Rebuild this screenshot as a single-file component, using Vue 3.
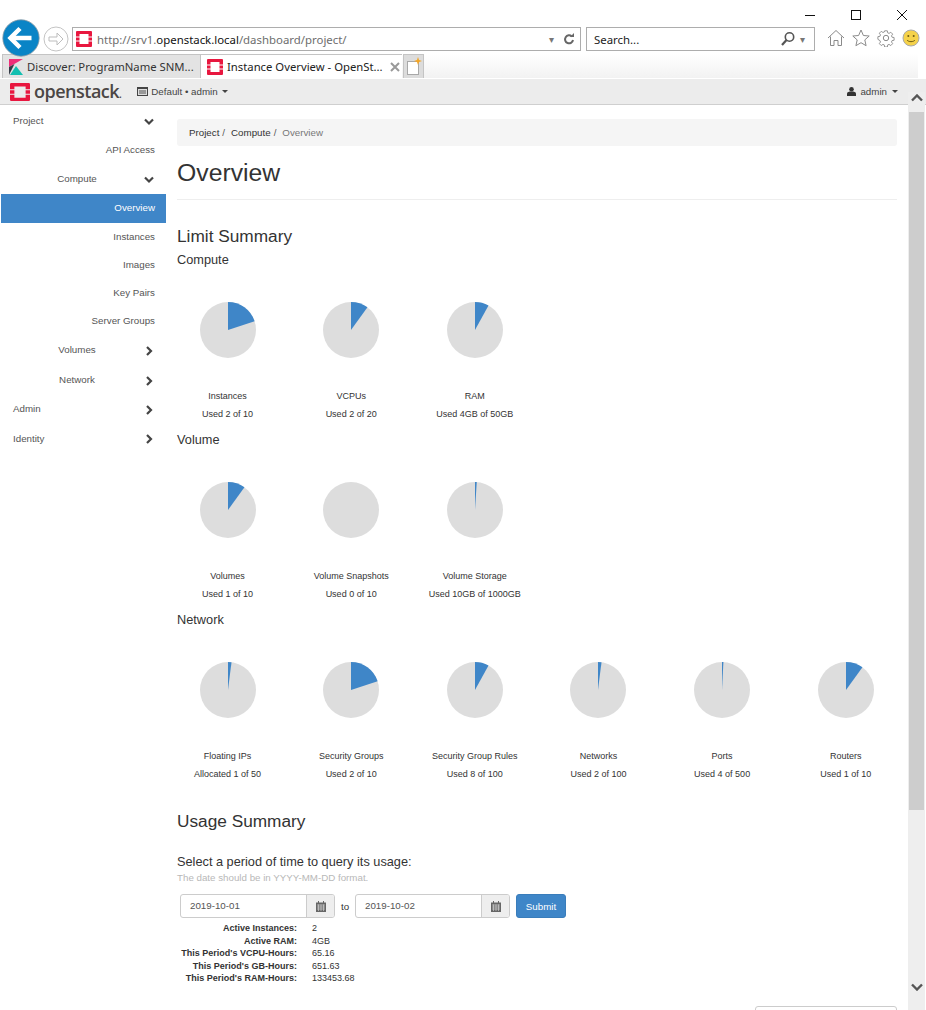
<template>
  <div class="window">
    <!-- ie chrome -->
    <div class="titlebar">
      <svg class="win-btn" width="16" height="16" viewBox="0 0 16 16"><path d="M3 8.500h10" stroke="#111" fill="none" /></svg>
      <svg class="win-btn" width="16" height="16" viewBox="0 0 16 16"><rect x="3.500" y="3.500" width="9" height="9" stroke="#111" fill="none" /></svg>
      <svg class="win-btn" width="16" height="16" viewBox="0 0 16 16"><path d="M3 3l10 10M13 3L3 13" stroke="#111" fill="none" /></svg>
    </div>
    <div class="toolbar">
      <svg class="back" width="38" height="38" viewBox="0 0 38 38">
        <circle cx="19" cy="19" r="18.200" fill="#0a84c6" stroke="#8a9aa5" stroke-width="0.8" />
        <path d="M8.500 19h21" stroke="#fff" stroke-width="4.500" fill="none" />
        <path d="M18 9.500L8.500 19l9.500 9.500" stroke="#fff" stroke-width="4.500" fill="none" />
      </svg>
      <svg class="forward" width="26" height="26" viewBox="0 0 26 26">
        <circle cx="13" cy="13" r="12" fill="#fff" stroke="#c4c4c4" />
        <path d="M6 11h8V7l6 6-6 6v-4H6z" fill="none" stroke="#bdbdbd" />
      </svg>
      <div class="addr">
        <svg class="fav" width="16" height="16" viewBox="0 0 16 16"><use href="#os-mark" /></svg>
        <span class="url">http://srv1.<b>openstack.local</b>/dashboard/project/</span>
        <span class="drop">▾</span>
        <svg width="12" height="14" viewBox="0 0 12 14"><path d="M10 8a4 4 0 1 1-1.200-3.600" fill="none" stroke="#666" stroke-width="2" /><path d="M7 5h4V1z" fill="#666" /></svg>
      </div>
      <div class="search">
        <span class="search-text">Search...</span>
        <svg width="16" height="16" viewBox="0 0 16 16"><circle cx="9.500" cy="6" r="4.200" fill="none" stroke="#555" stroke-width="1.600" /><path d="M6.500 9L2 14" stroke="#555" stroke-width="2.200" /></svg>
        <span class="drop">▾</span>
      </div>
      <div class="tools">
        <svg width="18" height="18" viewBox="0 0 18 18"><path d="M1 9l8-7.500L17 9M3.500 7.500v9H7v-5h4v5h3.500v-9" fill="none" stroke="#8a8a8a" /></svg>
        <svg width="18" height="18" viewBox="0 0 18 18"><path d="M9 1l2.400 5.500 5.800.5-4.400 3.900 1.300 5.800L9 13.700l-5.100 3 1.300-5.800L.8 7l5.800-.5z" fill="none" stroke="#8a8a8a" /></svg>
        <svg width="18" height="18" viewBox="0 0 18 18"><circle cx="9" cy="9" r="2.700" fill="none" stroke="#8a8a8a" /><path d="M7.500 1h3l.4 2.300 1.500.6 1.900-1.300 2.100 2.100-1.300 1.900.6 1.500 2.300.4v3l-2.300.4-.6 1.500 1.300 1.900-2.100 2.100-1.900-1.300-1.500.6-.4 2.300h-3l-.4-2.300-1.500-.6-1.900 1.300-2.100-2.100 1.300-1.900-.6-1.500L0 10.500v-3l2.300-.4.6-1.500-1.300-1.900 2.100-2.100 1.900 1.300 1.500-.6z" fill="none" stroke="#8a8a8a" transform="translate(.9 .9) scale(.9)" /></svg>
        <svg width="18" height="18" viewBox="0 0 18 18"><circle cx="9" cy="9" r="8" fill="#f5d24a" stroke="#a9a9a9" /><circle cx="6.300" cy="7" r="1" fill="#6d5a12" /><circle cx="11.700" cy="7" r="1" fill="#6d5a12" /><path d="M5 11c1.500 2.200 6.500 2.200 8 0" fill="none" stroke="#6d5a12" /></svg>
      </div>
    </div>
    <div class="tabstrip">
      <div class="tab tab-off">
        <svg width="14" height="16" viewBox="0 0 14 16">
          <path d="M0 0h14L0 8z" fill="#ef2f78" />
          <path d="M0 8l5.500-3L0 16z" fill="#333a45" />
          <path d="M1 16L7 7l7 9z" fill="#12bfb0" />
        </svg>
        <span>Discover: ProgramName SNM...</span>
      </div>
      <div class="tab tab-on">
        <svg width="16" height="16" viewBox="0 0 16 16"><use href="#os-mark" /></svg>
        <span class="tab-title">Instance Overview - OpenSt...</span>
        <svg class="tab-close" width="10" height="10" viewBox="0 0 10 10"><path d="M1 1l8 8M9 1L1 9" stroke="#999" stroke-width="2" /></svg>
      </div>
      <div class="tab-new">
        <svg width="16" height="20" viewBox="0 0 16 20">
          <rect x="1.500" y="4.500" width="11" height="13" fill="#fff" stroke="#a8a8a8" />
          <path d="M12 0l1 3 3 1-3 1-1 3-1-3-3-1 3-1z" fill="#f5a623" />
        </svg>
      </div>
    </div>

    <!-- horizon -->
    <nav class="topbar">
      <svg class="logo" width="20" height="18" viewBox="0 0 16 16" preserveAspectRatio="none"><use href="#os-mark" /></svg>
      <span class="brand">openstack<small>.</small></span>
      <span class="project">
        <svg width="11" height="9" viewBox="0 0 11 9"><rect width="11" height="9" fill="#444" /><path d="M1 2h9v6H1z" fill="#ddd" /><path d="M2 4h7M2 6h7" stroke="#555" /></svg>
        Default • admin
        <i class="caret"></i>
      </span>
      <span class="user">
        <svg width="9" height="9" viewBox="0 0 9 9"><circle cx="4.500" cy="2.300" r="2.300" fill="#333" /><path d="M0 9V6.500C0 5 2 4.500 4.500 4.500S9 5 9 6.500V9z" fill="#333" /></svg>
        admin
        <i class="caret"></i>
      </span>
    </nav>

    <div class="page">
      <aside class="sidebar">
        <div
          v-for="item in menu"
          :key="item.label"
          class="menu-item"
          :class="[`lvl-${item.level}`, { active: item.active, hasicon: item.arrow }]"
          :style="{ height: item.h + 'px' }"
        >
          <span class="menu-label">{{ item.label }}</span>
          <svg v-if="item.arrow === 'down'" class="chev" width="10" height="8" viewBox="0 0 10 8"><path d="M1 1.500l4 4 4-4" fill="none" stroke="#444" stroke-width="2.200" /></svg>
          <svg v-if="item.arrow === 'right'" class="chev" width="10" height="10" viewBox="0 0 10 10"><path d="M3 1l4 4-4 4" fill="none" stroke="#444" stroke-width="2.200" /></svg>
        </div>
      </aside>

      <main class="content">
        <div class="breadcrumb">
          <span>Project</span><em>/</em><span>Compute</span><em>/</em><span class="here">Overview</span>
        </div>
        <h1>Overview</h1>

        <h2 class="limit-title">Limit Summary</h2>
        <section v-for="group in groups" :key="group.title" class="limits">
          <h3>{{ group.title }}</h3>
          <div class="pies">
            <div v-for="pie in group.pies" :key="pie.name" class="pie-cell">
              <svg width="56" height="56" viewBox="0 0 56 56">
                <circle cx="28" cy="28" r="28" fill="#dddddd" />
                <path v-if="pie.frac > 0" :d="wedge(pie.frac)" fill="#3f86c8" />
              </svg>
              <div class="pie-name">{{ pie.name }}</div>
              <div class="pie-used">{{ pie.used }}</div>
            </div>
          </div>
        </section>

        <h2 class="usage-title">Usage Summary</h2>
        <h4>Select a period of time to query its usage:</h4>
        <p class="hint">The date should be in YYYY-MM-DD format.</p>
        <form class="period" @submit.prevent>
          <div class="datebox">
            <span class="dateval">2019-10-01</span>
            <span class="addon"><svg width="10" height="11" viewBox="0 0 10 11"><path d="M0 1.500h10V11H0z" fill="#666" /><path d="M2 0h1v2H2zM7 0h1v2H7z" fill="#666" /><path d="M1 4h8M1 6h8M1 8h8M2.500 3.500v6.500M5 3.500v6.500M7.500 3.500v6.500" stroke="#ddd" stroke-width=".6" /></svg></span>
          </div>
          <span class="to">to</span>
          <div class="datebox">
            <span class="dateval">2019-10-02</span>
            <span class="addon"><svg width="10" height="11" viewBox="0 0 10 11"><path d="M0 1.500h10V11H0z" fill="#666" /><path d="M2 0h1v2H2zM7 0h1v2H7z" fill="#666" /><path d="M1 4h8M1 6h8M1 8h8M2.500 3.500v6.500M5 3.500v6.500M7.500 3.500v6.500" stroke="#ddd" stroke-width=".6" /></svg></span>
          </div>
          <button class="submit" type="submit">Submit</button>
        </form>
        <dl class="stats">
          <template v-for="row in stats" :key="row[0]">
            <dt>{{ row[0] }}</dt>
            <dd>{{ row[1] }}</dd>
          </template>
        </dl>
        <div class="stub-wrap"><div class="stub"></div></div>
      </main>

      <div class="scrollbar">
        <svg width="12" height="8" viewBox="0 0 12 8"><path d="M1 6.500l5-5 5 5" fill="none" stroke="#555" stroke-width="2.400" /></svg>
        <div class="thumb"></div>
        <svg class="sb-down" width="12" height="8" viewBox="0 0 12 8"><path d="M1 1.500l5 5 5-5" fill="none" stroke="#555" stroke-width="2.400" /></svg>
      </div>
    </div>

    <svg width="0" height="0" class="defs">
      <symbol id="os-mark" viewBox="0 0 16 16">
        <path d="M1 0h14a1 1 0 0 1 1 1v4.500h-3.500V3h-9v2.500H0V1a1 1 0 0 1 1-1z" fill="#e8173f" />
        <path d="M0 10.500h3.500V13h9v-2.500H16V15a1 1 0 0 1-1 1H1a1 1 0 0 1-1-1z" fill="#e8173f" />
        <path d="M0 6.500h3.500v3H0zM12.500 6.500H16v3h-3.500z" fill="#e8173f" />
      </symbol>
    </svg>
  </div>
</template>

<script setup>
const menu = [
  { label: 'Project', level: 0, arrow: 'down', h: 29 },
  { label: 'API Access', level: 2, h: 29 },
  { label: 'Compute', level: 1, arrow: 'down', h: 29 },
  { label: 'Overview', level: 2, active: true, h: 29 },
  { label: 'Instances', level: 2, h: 28 },
  { label: 'Images', level: 2, h: 28 },
  { label: 'Key Pairs', level: 2, h: 28 },
  { label: 'Server Groups', level: 2, h: 28 },
  { label: 'Volumes', level: 1, arrow: 'right', h: 31 },
  { label: 'Network', level: 1, arrow: 'right', h: 29 },
  { label: 'Admin', level: 0, arrow: 'right', h: 29 },
  { label: 'Identity', level: 0, arrow: 'right', h: 30 }
]

const groups = [
  {
    title: 'Compute',
    pies: [
      { name: 'Instances', used: 'Used 2 of 10', frac: 0.2 },
      { name: 'VCPUs', used: 'Used 2 of 20', frac: 0.1 },
      { name: 'RAM', used: 'Used 4GB of 50GB', frac: 0.08 }
    ]
  },
  {
    title: 'Volume',
    pies: [
      { name: 'Volumes', used: 'Used 1 of 10', frac: 0.1 },
      { name: 'Volume Snapshots', used: 'Used 0 of 10', frac: 0 },
      { name: 'Volume Storage', used: 'Used 10GB of 1000GB', frac: 0.01 }
    ]
  },
  {
    title: 'Network',
    pies: [
      { name: 'Floating IPs', used: 'Allocated 1 of 50', frac: 0.02 },
      { name: 'Security Groups', used: 'Used 2 of 10', frac: 0.2 },
      { name: 'Security Group Rules', used: 'Used 8 of 100', frac: 0.08 },
      { name: 'Networks', used: 'Used 2 of 100', frac: 0.02 },
      { name: 'Ports', used: 'Used 4 of 500', frac: 0.008 },
      { name: 'Routers', used: 'Used 1 of 10', frac: 0.1 }
    ]
  }
]

const stats = [
  ['Active Instances:', '2'],
  ['Active RAM:', '4GB'],
  ["This Period's VCPU-Hours:", '65.16'],
  ["This Period's GB-Hours:", '651.63'],
  ["This Period's RAM-Hours:", '133453.68']
]

// pie slice from 12 o'clock, clockwise
function wedge(frac) {
  const a = frac * Math.PI * 2
  const x = 28 + 28 * Math.sin(a)
  const y = 28 - 28 * Math.cos(a)
  return `M28 28V0A28 28 0 0 1 ${x.toFixed(2)} ${y.toFixed(2)}Z`
}
</script>

<style>
html, body {
  margin: 0;
  background: #fff;
  overflow: hidden;
}
</style>

<style scoped>
.window {
  width: 926px;
  height: 1010px;
  overflow: hidden;
  position: relative;
  background: #fff;
  font-family: "Liberation Sans", Arial, sans-serif;
  font-size: 9.75px;
  color: #333;
}

.defs {
  position: absolute;
}

.titlebar {
  height: 27px;
  display: flex;
  justify-content: flex-end;
  align-items: flex-end;
  gap: 30px;
  padding-right: 16px;
  box-sizing: border-box;
  padding-bottom: 4px;
}

.toolbar {
  height: 27px;
  display: flex;
  align-items: flex-start;
  position: relative;
  padding-left: 43px;
  box-sizing: border-box;
}

.back {
  position: absolute;
  left: 2px;
  top: -8px;
  z-index: 2;
}

.forward {
  margin-right: 3px;
  margin-top: -1px;
}

.addr,
.search {
  height: 24px;
  box-sizing: border-box;
  border: 1px solid #adadad;
  display: flex;
  align-items: center;
  font-family: "Noto Sans", sans-serif;
  font-size: 11.4px;
  background: #fff;
}

.addr {
  width: 509px;
  padding: 0 5px 0 3px;
  color: #6d6d6d;
}

.fav {
  margin-right: 5px;
}

.url {
  flex: 1;
}

.url b {
  font-weight: 400;
  color: #111;
}

.drop {
  color: #777;
  font-size: 10px;
  margin: 0 9px 0 0;
}

.search {
  width: 229px;
  margin-left: 5px;
  padding-left: 7px;
  color: #222;
}

.search-text {
  flex: 1;
}

.search .drop {
  margin: 0 9px 0 4px;
}

.tools {
  display: flex;
  gap: 7px;
  margin-left: 12px;
  margin-top: 2px;
}

.tabstrip {
  height: 24px;
  display: flex;
  padding-left: 2px;
  box-sizing: border-box;
  background: linear-gradient(#ffffff 0%, #f2f2f2 100%);
  font-family: "Noto Sans", sans-serif;
  font-size: 11.3px;
  color: #222;
  margin-right: 8px;
}

.tab {
  width: 199px;
  box-sizing: border-box;
  display: flex;
  align-items: center;
  gap: 4px;
  padding-left: 6px;
  white-space: nowrap;
  overflow: hidden;
}

.tab svg {
  flex-shrink: 0;
}

.tab-off {
  background: #e3e3e3;
  border: 1px solid #c4c4c4;
  border-bottom: none;
  color: #333;
}

.tab-on {
  width: 201px;
  background: #fff;
  padding-left: 6px;
  border-top: 1px solid #c4c4c4;
}

.tab-title {
  width: 159px;
  flex-shrink: 0;
}

.tab-close {
  margin-left: 0;
}

.tab-new {
  width: 21px;
  margin-left: 1px;
  box-sizing: border-box;
  background: #dcdcdc;
  border: 1px solid #c4c4c4;
  border-bottom: none;
  display: flex;
  align-items: center;
  justify-content: center;
}

.topbar {
  height: 27px;
  background: #ececec;
  border-top: 1px solid #fff;
  border-bottom: 1px solid #cfcfcf;
  box-sizing: border-box;
  display: flex;
  align-items: center;
  padding: 0 28px 0 10px;
  color: #444;
}

.brand {
  font-family: "Open Sans", sans-serif;
  font-size: 18px;
  font-weight: 600;
  letter-spacing: -0.5px;
  color: #4b4644;
  margin-left: 4px;
  margin-top: -2px;
}

.brand small {
  font-size: 10px;
}

.project {
  margin-left: 16px;
  display: flex;
  align-items: center;
  gap: 3px;
}

.user {
  margin-left: auto;
  display: flex;
  align-items: center;
  gap: 4px;
}

.caret {
  display: inline-block;
  border-top: 3px solid #444;
  border-left: 3px solid transparent;
  border-right: 3px solid transparent;
  margin-left: 1px;
}

.page {
  display: flex;
  height: 905px;
}

.sidebar {
  width: 165px;
  margin-left: 1px;
  flex-shrink: 0;
  padding-top: 2px;
  color: #555;
}

.menu-item {
  display: grid;
  grid-template-columns: 1fr 22px;
  align-items: center;
  box-sizing: border-box;
  padding-right: 11px;
  padding-bottom: 2px;
}

.menu-item:not(.hasicon) {
  grid-template-columns: 1fr;
  justify-items: end;
}

.lvl-0 .menu-label {
  padding-left: 12px;
}

.lvl-1 .menu-label {
  text-align: center;
  display: block;
  padding-left: 20px;
}

.active {
  background: #3f86c8;
  color: #fff;
}

.chev {
  justify-self: end;
  margin-right: 1px;
  margin-top: 2px;
}

.content {
  width: 720px;
  margin-left: 11px;
  flex-shrink: 0;
}

.breadcrumb {
  margin-top: 14px;
  height: 27px;
  background: #f5f5f5;
  border-radius: 3px;
  display: flex;
  align-items: center;
  padding-left: 12px;
}

.breadcrumb em {
  font-style: normal;
  margin: 0 6px 0 3px;
  color: #555;
}

.here {
  color: #777;
}

h1 {
  margin: 0;
  height: 54px;
  box-sizing: border-box;
  padding-top: 12px;
  font-size: 24.75px;
  line-height: 29px;
  font-weight: 400;
  border-bottom: 1px solid #eee;
}

h2 {
  margin: 0;
  font-size: 17.25px;
  line-height: 20px;
  font-weight: 400;
}

.limit-title {
  margin-top: 26px;
}

h3 {
  margin: 0;
  font-size: 12.75px;
  line-height: 16px;
  font-weight: 400;
}

.limits {
  height: 180px;
}

.limits:first-of-type {
  margin-top: 6px;
}

.pies {
  display: grid;
  grid-template-columns: repeat(6, 123.67px);
  margin-left: -11.33px;
  margin-top: 34px;
}

.pie-cell {
  display: flex;
  flex-direction: column;
  align-items: center;
  font-size: 9px;
}

.pie-cell svg {
  display: block;
}

.pie-name {
  margin-top: 32px;
  line-height: 12px;
}

.pie-used {
  margin-top: 6px;
  line-height: 12px;
}

.usage-title {
  margin-top: 19px;
}

h4 {
  margin: 22px 0 0;
  font-size: 12.75px;
  line-height: 18px;
  font-weight: 400;
}

.hint {
  margin: 0;
  font-size: 9.75px;
  line-height: 14px;
  color: #b8b8b8;
}

.period {
  margin: 9px 0 0 3px;
  display: flex;
  align-items: center;
}

.datebox {
  width: 155px;
  height: 24px;
  box-sizing: border-box;
  border: 1px solid #ccc;
  border-radius: 3px;
  display: flex;
  align-items: stretch;
}

.dateval {
  flex: 1;
  padding-left: 9px;
  line-height: 22px;
  color: #555;
}

.addon {
  width: 27px;
  background: #eee;
  border-left: 1px solid #ccc;
  display: flex;
  align-items: center;
  justify-content: center;
  border-radius: 0 2px 2px 0;
}

.to {
  width: 20px;
  text-align: center;
}

.submit {
  margin-left: 6px;
  width: 50px;
  height: 24px;
  padding: 0;
  border: 1px solid #3a7dbb;
  border-radius: 3px;
  background: #3f86c8;
  color: #fff;
  font: inherit;
}

.stats {
  margin: 4px 0 0;
  display: grid;
  grid-template-columns: 120px auto;
  justify-content: start;
  font-size: 9px;
  line-height: 12.5px;
}

dt {
  font-weight: 700;
  text-align: right;
  white-space: nowrap;
}

dd {
  margin: 0 0 0 15px;
}

.stub-wrap {
  display: flex;
  justify-content: flex-end;
  margin-top: 21px;
}

.stub {
  width: 142px;
  height: 30px;
  box-sizing: border-box;
  border: 1px solid #ccc;
  border-radius: 3px;
}

.scrollbar {
  position: absolute;
  top: 92px;
  right: 1px;
  bottom: 0;
  width: 17px;
  background: #eee;
  display: flex;
  flex-direction: column;
  align-items: center;
  padding-top: 2px;
  box-sizing: border-box;
}

.thumb {
  width: 15px;
  height: 698px;
  margin-top: 10px;
  background: #cdcdcd;
}

.sb-down {
  margin-top: 173px;
}
</style>
